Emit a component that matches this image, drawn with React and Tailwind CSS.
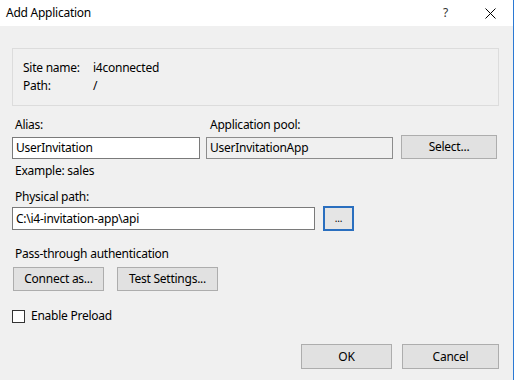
import React from "react";

/**
 * Win10-style push button
 */
function Btn({ children, className = "" }) {
  return (
    <button className={`flex items-center justify-center bg-[#e1e1e1] border border-[#adadad] text-[12px] text-black ${className}`}>
      {children}
    </button>
  );
}

/**
 * Single-line text box
 */
function Field({ value, className = "" }) {
  return (
    <div className={`flex items-center border pl-[3px] text-[12px] text-black ${className}`}>
      {value}
    </div>
  );
}

export default function App() {
  return (
    <div className="w-[514px] h-[380px] bg-[#f0f0f0] border-r border-[#2b79d3] flex flex-col font-['Noto_Sans','Open_Sans',sans-serif] text-[12px] text-black leading-[16px] tracking-[-0.25px]">
      {/* title bar */}
      <div className="h-[26px] bg-white flex items-center pl-[6px] shrink-0">
        <span>Add Application</span>
        <div className="ml-auto flex items-center">
          <span className="mr-[37px] text-[#333]">?</span>
          <svg width="11" height="11" viewBox="0 0 11 11" className="mr-[17px]">
            <path d="M0.5 0.5 L10.5 10.5 M10.5 0.5 L0.5 10.5" stroke="#000" strokeWidth="1" fill="none" />
          </svg>
        </div>
      </div>

      <div className="pl-[12px] flex flex-col">
        {/* site info group */}
        <div className="mt-[22px] w-[487px] h-[58px] border border-[#dcdcdc] pt-[10px] pl-[10px] leading-[18px]">
          <div className="flex">
            <span className="w-[70px]">Site name:</span>
            <span>i4connected</span>
          </div>
          <div className="flex">
            <span className="w-[70px]">Path:</span>
            <span>/</span>
          </div>
        </div>

        {/* alias / pool */}
        <div className="mt-[11px] flex items-start">
          <div className="w-[188px] flex flex-col">
            <span className="pl-[3px] h-[16px]">Alias:</span>
            <Field value="UserInvitation" className="mt-[4px] h-[22px] bg-white border-[#7a7a7a]" />
          </div>
          <div className="ml-[6px] w-[187px] flex flex-col">
            <span className="pl-[4px] h-[16px]">Application pool:</span>
            <Field value="UserInvitationApp" className="mt-[4px] h-[22px] bg-[#f0f0f0] border-[#8c8c8c]" />
          </div>
          <Btn className="ml-[8px] mt-[18px] w-[96px] h-[24px]">Select...</Btn>
        </div>

        <span className="mt-[4px] pl-[3px]">Example: sales</span>

        {/* physical path */}
        <span className="mt-[10px] pl-[3px]">Physical path:</span>
        <div className="mt-[1px] flex items-center">
          <Field value="C:\i4-invitation-app\api" className="w-[303px] h-[23px] bg-white border-[#7a7a7a]" />
          <button className="ml-[8px] w-[31px] h-[25px] flex items-center justify-center bg-[#e5e5e5] border-2 border-[#2a6fbf] text-[10px] leading-none pb-[2px]">
            ...
          </button>
        </div>

        {/* pass-through */}
        <span className="mt-[15px] pl-[3px]">Pass-through authentication</span>
        <div className="mt-[5px] flex">
          <Btn className="ml-[1px] w-[91px] h-[24px]">Connect as...</Btn>
          <Btn className="ml-[13px] w-[101px] h-[24px]">Test Settings...</Btn>
        </div>

        {/* preload */}
        <div className="mt-[17px] flex items-center">
          <div className="w-[13px] h-[13px] border border-[#333] bg-white" />
          <span className="ml-[6px]">Enable Preload</span>
        </div>

        {/* footer */}
        <div className="mt-[20px] w-[487px] flex justify-end">
          <Btn className="w-[91px] h-[25px]">OK</Btn>
          <Btn className="ml-[10px] w-[97px] h-[25px]">Cancel</Btn>
        </div>
      </div>
    </div>
  );
}
